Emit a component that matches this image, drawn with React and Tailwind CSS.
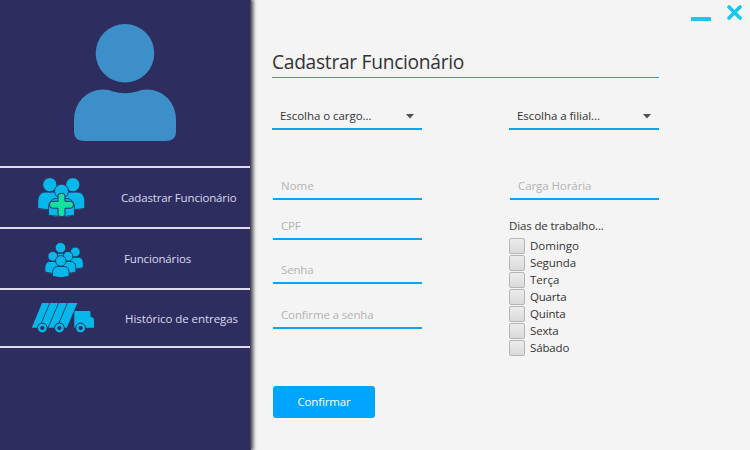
import React from "react";

const DAYS = [
  ["Domingo", "tracking-[0px]"],
  ["Segunda", "tracking-[-0.08px]"],
  ["Terça", "tracking-[0px]"],
  ["Quarta", "tracking-[-0.2px]"],
  ["Quinta", "tracking-[-0.15px]"],
  ["Sexta", "tracking-[-0.15px]"],
  ["Sábado", "tracking-[-0.15px]"],
];

function Person({ x, y, r, w, h }) {
  const left = x - w / 2;
  const right = x + w / 2;
  const top = y + r + 0.3;
  const bottom = top + h;
  return (
    <g fill="#06b8ea" stroke="#2e2d5f" strokeWidth="0.9">
      <path d={`M${left} ${bottom - 1.5}V${top + h * 0.55}C${left} ${top + h * 0.15} ${x - w * 0.34} ${top} ${x - w * 0.2} ${top}H${x + w * 0.2}C${x + w * 0.34} ${top} ${right} ${top + h * 0.15} ${right} ${top + h * 0.55}V${bottom - 1.5}Q${x} ${bottom + 1.5} ${left} ${bottom - 1.5}Z`} />
      <circle cx={x} cy={y} r={r} />
    </g>
  );
}

function AddTeamIcon() {
  return (
    <svg className="h-10 w-12" viewBox="0 0 48 40">
      <Person x={12.8} y={6.7} r={7.1} w={24} h={17.8} />
      <Person x={35.8} y={6.7} r={7.1} w={24} h={17.8} />
      <Person x={24.5} y={13.2} r={7} w={26} h={18.2} />
      <path d="M21 17.8Q21 15.2 24.5 15.2Q28 15.2 28 17.8V23.3H33.7Q36.5 23.3 36.5 26.7Q36.5 30.2 33.7 30.2H28V36.2Q28 38.7 24.5 38.7Q21 38.7 21 36.2V30.2H15.3Q12.5 30.2 12.5 26.7Q12.5 23.3 15.3 23.3H21Z" fill="#12e29c" stroke="#2e2d5f" strokeWidth="1" />
    </svg>
  );
}

function TeamIcon() {
  return (
    <svg className="h-9 w-[46px]" viewBox="0 0 46 36">
      <Person x={20.5} y={6.7} r={5.3} w={17} h={13} />
      <Person x={35.3} y={11} r={4.9} w={16} h={12} />
      <Person x={12.8} y={15.3} r={4.9} w={15.8} h={12} />
      <Person x={28} y={15.3} r={4.9} w={15.8} h={12} />
      <Person x={20.8} y={19.9} r={5.3} w={16.5} h={11.3} />
    </svg>
  );
}

function TruckIcon() {
  return (
    <svg className="h-[30px] w-16" viewBox="0 0 64 30">
      <g fill="#06b8ea">
        <path d="M10 0H17.4L6.9 24.8H-0.2Z" />
        <path d="M18.2 0H26.2L15.7 24.8H7.7Z" />
        <path d="M27 0H35L24.5 24.8H16.5Z" />
        <path d="M35.8 0H45.3L34.8 24.8H25.3Z" />
        <path d="M43.5 8H57.2Q58.5 8 58.5 9.3V13.8Q62 14.5 62 17V24.8H42.3V9Q42.3 8 43.5 8Z" />
      </g>
      {[10.3, 27.4, 48.6].map((x) => (
        <g key={x}>
          <circle cx={x} cy="25" r="4.9" fill="#06b8ea" stroke="#2e2d5f" strokeWidth="1" />
          <circle cx={x} cy="25" r="2.1" fill="#2e2d5f" />
        </g>
      ))}
    </svg>
  );
}

function Combo({ children, tracking }) {
  return (
    <div className="flex h-[30px] w-[150px] items-center justify-between border-b-2 border-[#0fa4f2] px-2 text-[11.5px] text-[#333]">
      <span className={`mt-1 whitespace-nowrap ${tracking}`}>{children}</span>
      <svg className="mt-1 h-[5px] w-2" viewBox="0 0 8 5"><path d="M0 0H8L4 4.6Z" fill="#505050" /></svg>
    </div>
  );
}

function Field({ label, tracking, margin }) {
  return (
    <div className={`flex h-[28px] w-[149px] items-center border-b-2 border-[#0fa4f2] pt-0.5 pl-2 text-[11.5px] text-[#b3b3b3] ${margin}`}>
      <span className={`whitespace-nowrap ${tracking}`}>{label}</span>
    </div>
  );
}

export default function App() {
  return (
    <div className="flex h-[450px] w-[750px] overflow-hidden bg-[#f4f4f4] font-['Open_Sans','Noto_Sans',sans-serif]">
      <aside className="z-10 h-full w-[251px] shrink-0 border-r border-[#48475c] bg-[#2e2d5f] text-[11.5px] text-[#d9dbee] shadow-[1px_0_4px_1px_rgba(0,0,0,0.75)]">
        <div className="flex h-[168px] border-b-2 border-[#dcdcee] pt-[23px] pl-[73px]">
          <svg className="h-[119px] w-[104px]" viewBox="0 0 104 119" fill="#3c8fc8">
            <circle cx="52" cy="30.3" r="29.3" />
            <path d="M1 97Q1 84 9.5 75Q18 66.5 30 66.5Q36 66.5 40 68.5Q52 72 64 68.5Q68 66.5 74 66.5Q86 66.5 94.5 75Q103 84 103 97V109Q103 118 92 118H12Q1 118 1 109Z" />
          </svg>
        </div>
        <div className="flex h-[61px] items-center border-b-2 border-[#dcdcee] pl-[37px]">
          <AddTeamIcon />
          <span className="ml-9 whitespace-nowrap tracking-[-0.16px]">Cadastrar Funcionário</span>
        </div>
        <div className="flex h-[61px] items-center border-b-2 border-[#dcdcee] pl-[40px]">
          <TeamIcon />
          <span className="ml-[38px] whitespace-nowrap tracking-[-0.15px]">Funcionários</span>
        </div>
        <div className="flex h-[58px] items-center border-b-2 border-[#dcdcee] pl-[32px]">
          <TruckIcon />
          <span className="mt-0.5 ml-[29px] whitespace-nowrap tracking-[-0.06px]">Histórico de entregas</span>
        </div>
      </aside>

      <main className="flex-1 pl-[21px]">
        <div className="flex h-10 justify-end gap-4 pr-2">
          <div className="mt-[17px] h-1 w-5 bg-[#16c8f0]" />
          <svg className="mt-[5px] h-[15px] w-[15px]" viewBox="0 0 15 15"><path d="M2 2L13 13M13 2L2 13" stroke="#16c8f0" strokeWidth="3.6" strokeLinecap="round" /></svg>
        </div>
        <h1 className="flex h-[37px] items-center pt-[7px] text-[19.2px] text-[#333]">
          <span className="whitespace-nowrap tracking-[-0.29px]">Cadastrar Funcionário</span>
        </h1>
        <div className="h-px w-[387px] bg-[#1fa5d0]" />
        <div className="mt-[22px] flex gap-[87px]">
          <Combo tracking="tracking-[-0.05px]">Escolha o cargo...</Combo>
          <Combo tracking="tracking-[-0.05px]">Escolha a filial...</Combo>
        </div>
        <div className="mt-[42px] flex gap-[87px]">
          <div className="w-[150px] pl-px">
            <Field label="Nome" tracking="tracking-[0px]" margin="" />
            <Field label="CPF" tracking="tracking-[-0.15px]" margin="mt-3" />
            <Field label="Senha" tracking="tracking-[-0.15px]" margin="mt-4" />
            <Field label="Confirme a senha" tracking="tracking-[-0.13px]" margin="mt-[17px]" />
            <button className="mt-[57px] h-8 w-[102px] rounded-[3px] bg-[#00a5ff] text-[11.5px] tracking-[-0.15px] text-white">Confirmar</button>
          </div>
          <div className="w-[150px]">
            <div className="pl-px"><Field label="Carga Horária" tracking="tracking-[-0.08px]" margin="" /></div>
            <p className="mt-[18px] h-[19px] text-[11.5px] leading-4 tracking-[-0.13px] text-[#333]">Dias de trabalho...</p>
            {DAYS.map(([day, tracking]) => (
              <label key={day} className={`flex h-[17px] items-center gap-[5px] text-[11.5px] leading-4 text-[#333] ${tracking}`}>
                <span className="h-4 w-4 rounded-[2px] border border-[#b5b5b5] bg-linear-to-b from-[#ececec] to-[#dadada]" />
                {day}
              </label>
            ))}
          </div>
        </div>
      </main>
    </div>
  );
}
